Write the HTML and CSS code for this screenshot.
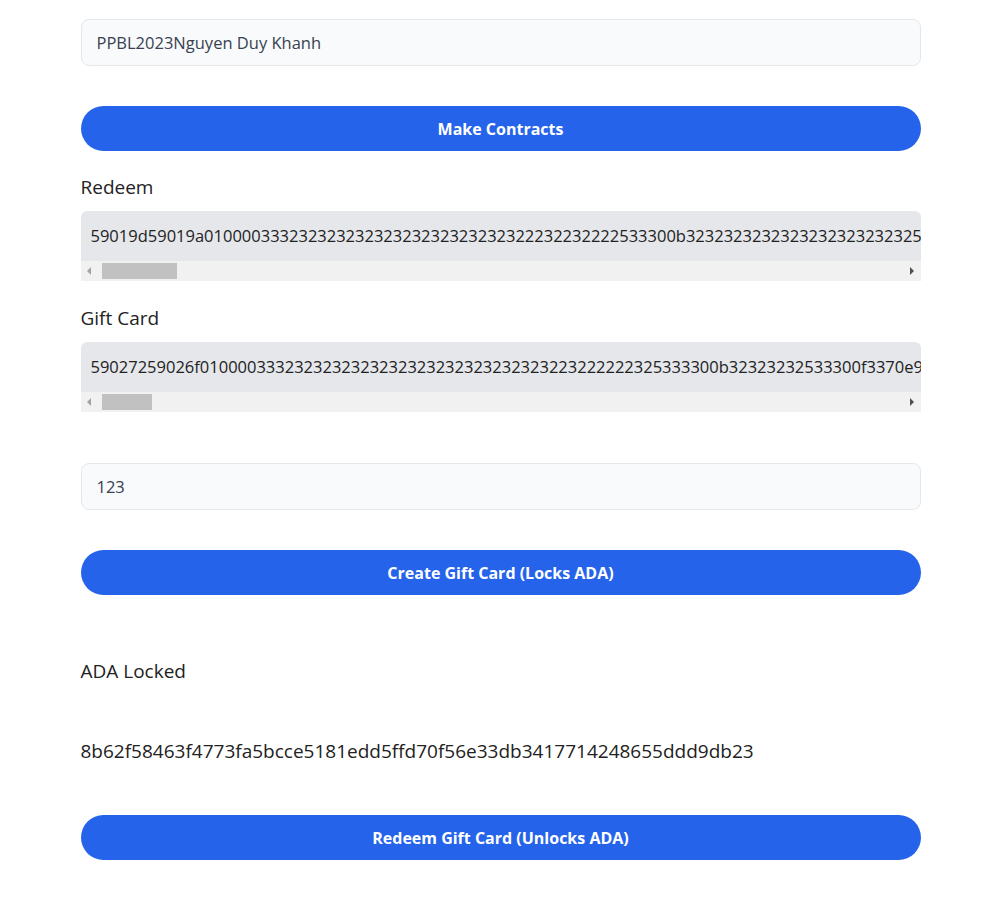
FILE: index.html
```html
<!DOCTYPE html>
<html lang="en">
<head>
<meta charset="utf-8">
<title>Gift Card</title>
<link rel="stylesheet" href="styles.css">
</head>
<body>
<main class="page">
  <input class="field field-first" type="text" value="PPBL2023Nguyen Duy Khanh">
  <button class="btn btn-make">Make Contracts</button>

  <h3 class="label label-redeem">Redeem</h3>
  <div class="code-box">
    <pre class="code">59019d59019a01000033323232323232323232323232322232232222533300b3232323232323232323232325333013301500213232533301130083014375400226464a66602a60300042930b1bad30160013012375400c2c602600260220046eb8c044004c044008dd6980780098078011bae300d001300d002375a601600260160046eb8c024004c024008c01cc020008c018004c00c008526136565734aae7555cf2ab9f5742ae881c3232323232323232325333012300d3014375400226464a66602860300042646464646eb4c060004c06000cdd6980b0011bae30150013013375400e2c6eb8c054004c054008dd7180980098089baa00216370e90001b8748000dd6980080091129998078010a4c26466600800866e0000d4ccc02d4008004528099b8a48120504552422d3230323356312e30303230330001375a6026004002446600c6601e4444a6660280042002264666008008602e0066644646600200200a44a66603200226603400a6600500629444cc00c00c004c06c008cc04400400856106010101010101010a49858c6eb8c048004c048008dd71808000980800119191800800918011980091991800800911299980a8010a5eb804cc8c8cc030c00cd5d08011bad301800230170013233001001002223371000a0106e1d2000375c602200460206ea8004dd5800a4c26cac6eb8004c8ccc00c000dd700080a99b8700153330123371e6eb8c00cc03cdd50011b8f0011480005854cc04124012a72656465656d6572206d75737420636f6e7461696e206120646174756d20666f7220746869732074786f75740016159a</pre>
    <div class="hscroll" aria-hidden="true">
      <span class="hs-btn"><span class="arrow arrow-left"></span></span>
      <span class="hs-track"><span class="hs-thumb thumb-redeem"></span></span>
      <span class="hs-btn"><span class="arrow arrow-right"></span></span>
    </div>
  </div>

  <h3 class="label label-gift">Gift Card</h3>
  <div class="code-box">
    <pre class="code">59027259026f0100003332323232323232323232323232323223222222325333300b32323232533300f3370e900118081baa00113232533301100e3012375400a264a666024601a60266ea80084c8c8c8c94ccc05cc0680084c8c8c94ccc060cdc3a400060346ea80184c8cdc4000a40206eb4c070c070004dd6980d980c1baa0061632533301a00114bd6f7b63009bab3301c30160014bd6f7b6300991299980e99b8f375c603c00400a26eacc0800044c01c0044cccc8c8c8c94ccc07ccdc3a4000603e6ea80204c8c94ccc084c0900084c8c8cc88cdc099b8148008cdc0a40046606001a646603000200e6eb4c0a0004c08cdd500e99b8700200113300d0023300d0010101637586046002604800460426ea80185858dd7180f80098101baa00a1632533301e3014301f37540022900009bad30233020375400264a66603c6028603e6ea8004530103d87a80001301f33022375200297ae0330120033756603a60406ea8014c8cc004004dd5980f98109baa00522533302100114c103d87a800013232323253330223371e00e004266e952000330270024bd70099802002000980d8019bae302400230280023026001375660400026040603a6ea8c08000cc074dd5180f80191980e180f003a5eb80c07000c58dd7180d8009bad301b002375c603200260326ea8c0640045858c064004c054dd50008b180b980a1baa001163016301700230150013011375400229309b2b19299980599b87480000044c8c94ccc040c04c00852616375c602200260186ea800c54ccc02ccdc3a40040022a666020601a6ea800c5261616300b37540046e1d200030093754002460126ea80048c8cc004004dd5801911980100119b8f375c6014002002460026e50005d68a99805a4812b4578706563746564206f6e207468652063757272656e742073637269707420746f206265206120706f6c69637900165734ae7155ceaab9e5573eae815d0aba25749122114865726d65734761736b47696674436172640048811c8b62f58463f4773fa5bcce5181edd5ffd70f56e33db3417714248655ddd9db230001</pre>
    <div class="hscroll" aria-hidden="true">
      <span class="hs-btn"><span class="arrow arrow-left"></span></span>
      <span class="hs-track"><span class="hs-thumb thumb-gift"></span></span>
      <span class="hs-btn"><span class="arrow arrow-right"></span></span>
    </div>
  </div>

  <input class="field field-amount" type="text" value="123">
  <button class="btn btn-create">Create Gift Card (Locks ADA)</button>

  <h3 class="label label-locked">ADA Locked</h3>
  <p class="hash">8b62f58463f4773fa5bcce5181edd5ffd70f56e33db3417714248655ddd9db23</p>
  <button class="btn btn-redeem">Redeem Gift Card (Unlocks ADA)</button>
</main>
</body>
</html>
```

FILE: styles.css
```css
* {
  box-sizing: border-box;
}

html, body {
  margin: 0;
  padding: 0;
  background: #ffffff;
}

body {
  font-family: "Open Sans", "Noto Sans", "Liberation Sans", sans-serif;
  color: #222222;
}

.page {
  width: 840px;
  margin: 0 auto;
  padding-top: 19px;
  display: flex;
  flex-direction: column;
}

.field {
  display: block;
  width: 100%;
  height: 47px;
  margin: 0;
  padding: 0 15px;
  background: #f9fafb;
  border: 1px solid #e5e7eb;
  border-radius: 8px;
  font-family: inherit;
  font-size: 16.5px;
  color: #374151;
  outline: none;
}

.btn {
  display: block;
  width: 100%;
  height: 45px;
  margin: 0;
  padding: 0;
  border: none;
  border-radius: 23px;
  background: #2563eb;
  color: #ffffff;
  font-family: inherit;
  font-size: 16px;
  font-weight: 700;
  cursor: pointer;
}

.btn-make {
  margin-top: 40px;
}

.label {
  margin: 0;
  font-size: 19px;
  line-height: 24px;
  font-weight: 400;
  color: #222222;
}

.label-redeem {
  margin-top: 24px;
}

.label-gift {
  margin-top: 25px;
}

.code-box {
  margin-top: 12px;
  display: flex;
  flex-direction: column;
}

.code {
  margin: 0;
  padding: 13px 10px;
  height: 50px;
  background: #e5e7eb;
  border-radius: 6px 6px 0 0;
  font-family: inherit;
  font-size: 16.5px;
  line-height: 24px;
  color: #222222;
  white-space: pre;
  overflow: hidden;
}

.hscroll {
  display: flex;
  align-items: center;
  height: 20px;
  background: #f1f1f1;
}

.hs-btn {
  flex: 0 0 17px;
  height: 20px;
  display: flex;
  align-items: center;
  justify-content: center;
}

.hs-track {
  flex: 1;
  height: 20px;
  display: flex;
  align-items: center;
  padding-left: 4px;
}

.hs-thumb {
  display: block;
  height: 16px;
  background: #c1c1c1;
}

.thumb-redeem {
  width: 75px;
}

.thumb-gift {
  width: 50px;
}

.arrow {
  display: block;
  width: 0;
  height: 0;
  border-top: 4px solid transparent;
  border-bottom: 4px solid transparent;
}

.arrow-left {
  border-right: 4px solid #a3a3a3;
}

.arrow-right {
  border-left: 4px solid #505050;
}

.field-amount {
  margin-top: 51px;
}

.btn-create {
  margin-top: 40px;
}

.label-locked {
  margin-top: 64px;
}

.hash {
  margin: 56px 0 0;
  font-size: 19px;
  line-height: 24px;
  color: #222222;
}

.btn-redeem {
  margin-top: 52px;
}
```
